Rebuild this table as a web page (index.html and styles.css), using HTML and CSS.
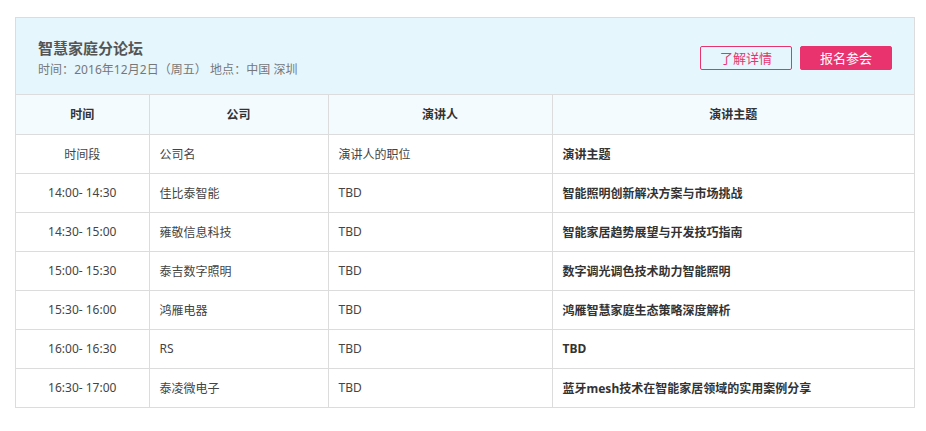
FILE: index.html
```html
<!DOCTYPE html>
<html lang="zh-CN">
<head>
<meta charset="utf-8">
<title>智慧家庭分论坛</title>
<link rel="stylesheet" href="styles.css">
</head>
<body>
<div class="forum">
  <div class="forum-head">
    <div class="forum-info">
      <h2 class="forum-title">智慧家庭分论坛</h2>
      <p class="forum-meta">时间：2016年12月2日（周五） 地点：中国 深圳</p>
    </div>
    <div class="forum-actions">
      <a class="btn btn-outline" href="#">了解详情</a>
      <a class="btn btn-solid" href="#">报名参会</a>
    </div>
  </div>
  <table class="agenda">
    <colgroup>
      <col class="c-time"><col class="c-company"><col class="c-speaker"><col class="c-topic">
    </colgroup>
    <thead>
      <tr><th>时间</th><th>公司</th><th>演讲人</th><th>演讲主题</th></tr>
    </thead>
    <tbody>
      <tr><td class="t">时间段</td><td>公司名</td><td>演讲人的职位</td><td class="topic">演讲主题</td></tr>
      <tr><td class="t">14:00- 14:30</td><td>佳比泰智能</td><td>TBD</td><td class="topic">智能照明创新解决方案与市场挑战</td></tr>
      <tr><td class="t">14:30- 15:00</td><td>雍敬信息科技</td><td>TBD</td><td class="topic">智能家居趋势展望与开发技巧指南</td></tr>
      <tr><td class="t">15:00- 15:30</td><td>泰吉数字照明</td><td>TBD</td><td class="topic">数字调光调色技术助力智能照明</td></tr>
      <tr><td class="t">15:30- 16:00</td><td>鸿雁电器</td><td>TBD</td><td class="topic">鸿雁智慧家庭生态策略深度解析</td></tr>
      <tr><td class="t">16:00- 16:30</td><td>RS</td><td>TBD</td><td class="topic">TBD</td></tr>
      <tr><td class="t">16:30- 17:00</td><td>泰凌微电子</td><td>TBD</td><td class="topic">蓝牙mesh技术在智能家居领域的实用案例分享</td></tr>
    </tbody>
  </table>
</div>
</body>
</html>
```
FILE: styles.css
```css
* { box-sizing: border-box; }
html, body { margin: 0; padding: 0; background: #fff; }
body {
  font-family: "Noto Sans", "Noto Sans CJK SC", sans-serif;
  color: #444;
  font-size: 12px;
}
.forum {
  width: 900px;
  margin: 17px 0 0 15px;
  border: 1px solid #dcdcdc;
}
.forum-head {
  height: 77px;
  background: #e6f6fd;
  display: flex;
  align-items: center;
  justify-content: space-between;
  padding: 3px 22px 0 22px;
  border-bottom: 1px solid #dcdcdc;
}
.forum-title {
  margin: 0;
  font-size: 15px;
  font-weight: bold;
  color: #555;
  line-height: 20px;
}
.forum-meta {
  margin: 4px 0 0;
  font-size: 12px;
  letter-spacing: 0.05px;
  color: #777;
  line-height: 16px;
}
.forum-actions {
  display: flex;
  gap: 8px;
  margin-top: 0;
}
.btn {
  display: flex;
  align-items: center;
  justify-content: center;
  width: 92px;
  height: 24px;
  font-size: 13px;
  text-decoration: none;
  border-radius: 2px;
  border: 1px solid #e8336f;
}
.btn-outline { color: #e8336f; background: transparent; }
.btn-solid { color: #fff; background: #e8336f; }
.agenda {
  width: 100%;
  border-collapse: collapse;
  table-layout: fixed;
}
.c-time { width: 133px; }
.c-company { width: 179px; }
.c-speaker { width: 224px; }
.agenda th, .agenda td {
  height: 39px;
  border: 1px solid #dcdcdc;
  padding: 0 10px;
  font-size: 12px;
  color: #444;
  text-align: left;
  vertical-align: middle;
}
.agenda tr > :first-child { border-left: 0; }
.agenda tr > :last-child { border-right: 0; }
.agenda tbody tr:last-child td { border-bottom: 0; }
.agenda thead th {
  background: #f3fbfe;
  text-align: center;
  font-weight: bold;
  color: #333;
  border-top: 0;
}
.agenda td.t { text-align: center; }
.agenda td.topic { font-weight: bold; color: #333; }
```
